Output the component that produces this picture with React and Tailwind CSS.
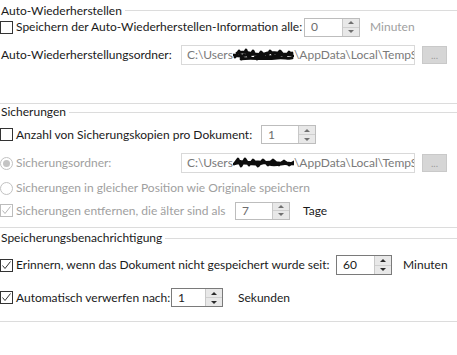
import React from 'react'

const font = { fontFamily: 'Lato, "Noto Sans", sans-serif' }

function Check({ checked, disabled }) {
  return (
    <span
      className={`w-[13px] h-[13px] shrink-0 border bg-white flex items-center justify-center ${
        disabled ? 'border-[#bcbcbc]' : 'border-[#333333]'
      }`}
    >
      {checked && (
        <svg width="11" height="11" viewBox="0 0 11 11">
          <path
            d="M1.5 5.5 L4 8.5 L9.5 1.5"
            fill="none"
            stroke={disabled ? '#b5b5b5' : '#333333'}
            strokeWidth="1"
          />
        </svg>
      )}
    </span>
  )
}

function Radio({ selected }) {
  return (
    <span className="w-[13px] h-[13px] shrink-0 rounded-full border border-[#c2c2c2] bg-white flex items-center justify-center">
      {selected && <span className="w-[7px] h-[7px] rounded-full bg-[#c4c4c4]" />}
    </span>
  )
}

function Spinner({ value, w = 'w-[56px]', dark, muted }) {
  return (
    <div
      className={`${w} h-full flex border bg-white ${dark ? 'border-[#7a7a7a]' : 'border-[#bdbdbd]'}`}
    >
      <div className={`flex-1 flex items-center pl-[6px] ${muted ? 'text-[#6d6d6d]' : 'text-[#1a1a1a]'}`}>
        {value}
      </div>
      <div className="w-[17px] flex flex-col border-l border-[#c8c8c8] bg-[#e8e8e8]">
        <div className="flex-1 flex items-center justify-center border-b border-[#cfcfcf]">
          <span className={`w-0 h-0 border-l-[3px] border-r-[3px] border-b-[3px] border-l-transparent border-r-transparent ${dark ? 'border-b-[#2a2a2a]' : 'border-b-[#707070]'}`} />
        </div>
        <div className="flex-1 flex items-center justify-center">
          <span className={`w-0 h-0 border-l-[3px] border-r-[3px] border-t-[3px] border-l-transparent border-r-transparent ${dark ? 'border-t-[#2a2a2a]' : 'border-t-[#707070]'}`} />
        </div>
      </div>
    </div>
  )
}

// blacked-out user name, drawn by hand in the original
function Scribble({ variant }) {
  const d =
    variant === 1
      ? 'M2 10 L6 4 L9 12 L13 3 L16 11 L20 4 L24 12 L28 5 L33 11 L37 4 L42 10 L47 4 L52 10 L56 5 L60 9 M1 8 C10 12 18 4 28 9 C38 13 46 5 58 8 M4 6 C14 2 24 11 34 6 C42 3 50 10 59 6 M8 12 C18 10 30 13 44 11 C50 10 55 12 59 11'
      : 'M2 8 L5 4 L8 11 L12 4 L16 10 L20 5 L25 11 L30 5 L35 10 L40 5 L46 10 L51 6 L56 10 L61 7 M1 9 C10 5 20 12 30 8 C40 5 50 11 61 8 M6 6 C16 10 26 4 36 9 C44 12 52 6 60 9'
  return (
    <svg width="61" height="16" viewBox="0 0 61 16" className="shrink-0">
      <path d={d} fill="none" stroke="#0d0d0d" strokeWidth="2.8" strokeLinecap="round" strokeLinejoin="round" />
    </svg>
  )
}

function PathInput({ variant }) {
  return (
    <div className="w-[234px] shrink-0 h-full border border-[#d9d9d9] bg-white flex items-center pl-[5px] overflow-hidden whitespace-nowrap text-[#7a7a7a]">
      <span className="shrink-0">C:\Users</span>
      <Scribble variant={variant} />
      <span className="shrink-0">\AppData\Local\TempSW</span>
    </div>
  )
}

function DotsButton() {
  return (
    <div className="ml-[7px] w-[25px] h-[18px] shrink-0 bg-[#d6d6d6] border border-[#c9c9c9] flex items-end justify-center pb-[3px] text-[#9a9a9a] text-[10px] leading-[10px]">
      ...
    </div>
  )
}

function Header({ children, className = '' }) {
  return (
    <div className={`flex items-center ${className}`}>
      <span className="pl-[1px] pr-[3px] text-[#1a1a1a]">{children}</span>
      <div className="flex-1 h-px bg-[#dcdcdc]" />
    </div>
  )
}

export default function App() {
  return (
    <div className="w-[457px] h-[355px] bg-white text-[12px] leading-[16px] overflow-hidden" style={font}>
      <Header className="h-[17px] pt-[4px]">Auto-Wiederherstellen</Header>

      <div className="h-[20px] flex items-center">
        <div className="w-[304px] shrink-0 flex items-center gap-[3px]">
          <Check />
          <span className="text-[#1a1a1a] whitespace-nowrap">Speichern der Auto-Wiederherstellen-Information alle:</span>
        </div>
        <div className="h-[19px]">
          <Spinner value="0" muted />
        </div>
        <span className="ml-[10px] text-[#a0a0a0]">Minuten</span>
      </div>

      <div className="mt-[8px] h-[20px] flex items-center">
        <span className="w-[181px] shrink-0 pl-[1px] text-[#1a1a1a] whitespace-nowrap">Auto-Wiederherstellungsordner:</span>
        <PathInput variant={1} />
        <DotsButton />
      </div>

      <div className="mt-[38px] h-px bg-[#dcdcdc]" />
      <Header className="h-[16px]">Sicherungen</Header>

      <div className="mt-[5px] h-[19px] flex items-center">
        <div className="w-[261px] shrink-0 flex items-center gap-[3px]">
          <Check />
          <span className="text-[#1a1a1a] whitespace-nowrap">Anzahl von Sicherungskopien pro Dokument:</span>
        </div>
        <div className="h-[19px]">
          <Spinner value="1" w="w-[55px]" muted />
        </div>
      </div>

      <div className="mt-[9px] h-[20px] flex items-center">
        <div className="w-[181px] shrink-0 flex items-center gap-[3px]">
          <Radio selected />
          <span className="text-[#a0a0a0]">Sicherungsordner:</span>
        </div>
        <PathInput variant={2} />
        <DotsButton />
      </div>

      <div className="mt-[6px] h-[18px] flex items-center gap-[3px]">
        <Radio />
        <span className="text-[#a0a0a0] whitespace-nowrap">Sicherungen in gleicher Position wie Originale speichern</span>
      </div>

      <div className="mt-[4px] h-[19px] flex items-center">
        <div className="w-[235px] shrink-0 flex items-center gap-[3px]">
          <Check checked disabled />
          <span className="text-[#a0a0a0] whitespace-nowrap">Sicherungen entfernen, die älter sind als</span>
        </div>
        <div className="h-[18px]">
          <Spinner value="7" w="w-[55px]" muted />
        </div>
        <span className="ml-[13px] text-[#1a1a1a]">Tage</span>
      </div>

      <div className="mt-[7px] h-px bg-[#dcdcdc]" />
      <Header className="h-[20px]">Speicherungsbenachrichtigung</Header>

      <div className="mt-[7px] h-[20px] flex items-center">
        <div className="w-[336px] shrink-0 flex items-center gap-[3px]">
          <Check checked />
          <span className="text-[#1a1a1a] whitespace-nowrap">Erinnern, wenn das Dokument nicht gespeichert wurde seit:</span>
        </div>
        <div className="h-[20px]">
          <Spinner value="60" dark />
        </div>
        <span className="ml-[11px] text-[#1a1a1a]">Minuten</span>
      </div>

      <div className="mt-[13px] h-[19px] flex items-center">
        <div className="w-[171px] shrink-0 flex items-center gap-[3px]">
          <Check checked />
          <span className="text-[#1a1a1a] whitespace-nowrap">Automatisch verwerfen nach:</span>
        </div>
        <div className="h-[19px]">
          <Spinner value="1" w="w-[52px]" dark />
        </div>
        <span className="ml-[15px] text-[#1a1a1a]">Sekunden</span>
      </div>

      <div className="mt-[14px] h-px bg-[#dcdcdc]" />
    </div>
  )
}
